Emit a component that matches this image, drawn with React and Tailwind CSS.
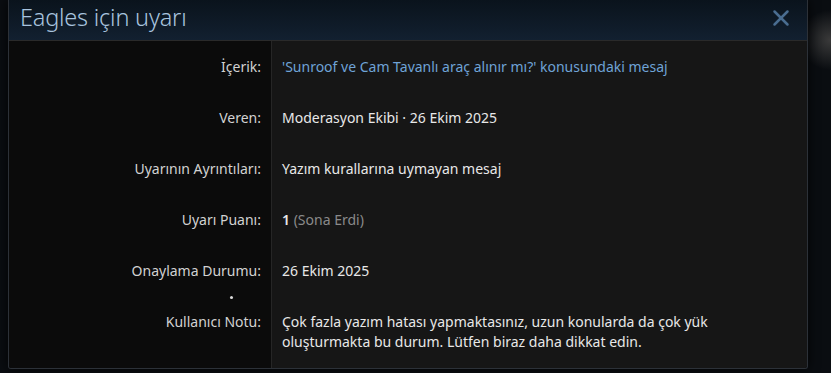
import { X } from "lucide-react";

const rows = [
  {
    label: "İçerik:",
    value: (
      <span className="text-[#6fa3d6]">
        'Sunroof ve Cam Tavanlı araç alınır mı?' konusundaki mesaj
      </span>
    ),
  },
  { label: "Veren:", value: "Moderasyon Ekibi · 26 Ekim 2025" },
  { label: "Uyarının Ayrıntıları:", value: "Yazım kurallarına uymayan mesaj" },
  {
    label: "Uyarı Puanı:",
    value: (
      <>
        <span className="font-semibold">1</span>{" "}
        <span className="text-[#8a8a8a]">(Sona Erdi)</span>
      </>
    ),
  },
  { label: "Onaylama Durumu:", value: "26 Ekim 2025" },
  {
    label: "Kullanıcı Notu:",
    dot: true,
    value: (
      <>
        Çok fazla yazım hatası yapmaktasınız, uzun konularda da çok yük
        <br />
        oluşturmakta bu durum. Lütfen biraz daha dikkat edin.
      </>
    ),
  },
];

export default function App() {
  return (
    <div
      className="w-[831px] h-[373px] overflow-hidden flex bg-[radial-gradient(circle_at_830px_40px,#3a3a3a_0,#0a0d11_30px),linear-gradient(90deg,#141b23,#07090c)] pl-[8px]"
      style={{ fontFamily: '"Noto Sans", "Open Sans", sans-serif' }}
    >
      <div className="w-[800px] h-[369px] flex flex-col border-x border-b border-[#2c3138] rounded-b-[3px] overflow-hidden shadow-[0_0_12px_rgba(0,0,0,0.8)]">
        {/* header */}
        <div className="h-[41px] shrink-0 flex items-center justify-between pl-[11px] pr-[13px] bg-gradient-to-b from-[#0a131c] to-[#122030] border-b border-[#2a2a2a]">
          <h2 className="text-[23.5px] font-light text-[#a8c4df] tracking-[-0.2px] leading-none pb-[5px]">
            Eagles için uyarı
          </h2>
          <X size={26} strokeWidth={2.3} className="text-[#4a6d90] mb-[5px]" />
        </div>

        {/* body */}
        <div className="flex-1 flex flex-col text-[14px] leading-[20px]">
          {rows.map((r) => (
            <div key={r.label} className="flex">
              <div className="relative w-[263px] shrink-0 bg-[#0b0b0b] border-r border-[#262626] text-right pr-[10px] pt-[16px] pb-[15px] text-[#d2d2d2]">
                {r.dot && (
                  <span className="absolute left-[221px] top-[0px] w-[3px] h-[3px] rounded-full bg-[#dcdcdc]" />
                )}
                {r.label}
              </div>
              <div className="flex-1 bg-[#161616] pl-[10px] pt-[16px] pb-[15px] text-[#e8e8e8]">
                {r.value}
              </div>
            </div>
          ))}
          <div className="flex flex-1">
            <div className="w-[263px] bg-[#0b0b0b] border-r border-[#262626]" />
            <div className="flex-1 bg-[#161616]" />
          </div>
        </div>
      </div>
    </div>
  );
}
